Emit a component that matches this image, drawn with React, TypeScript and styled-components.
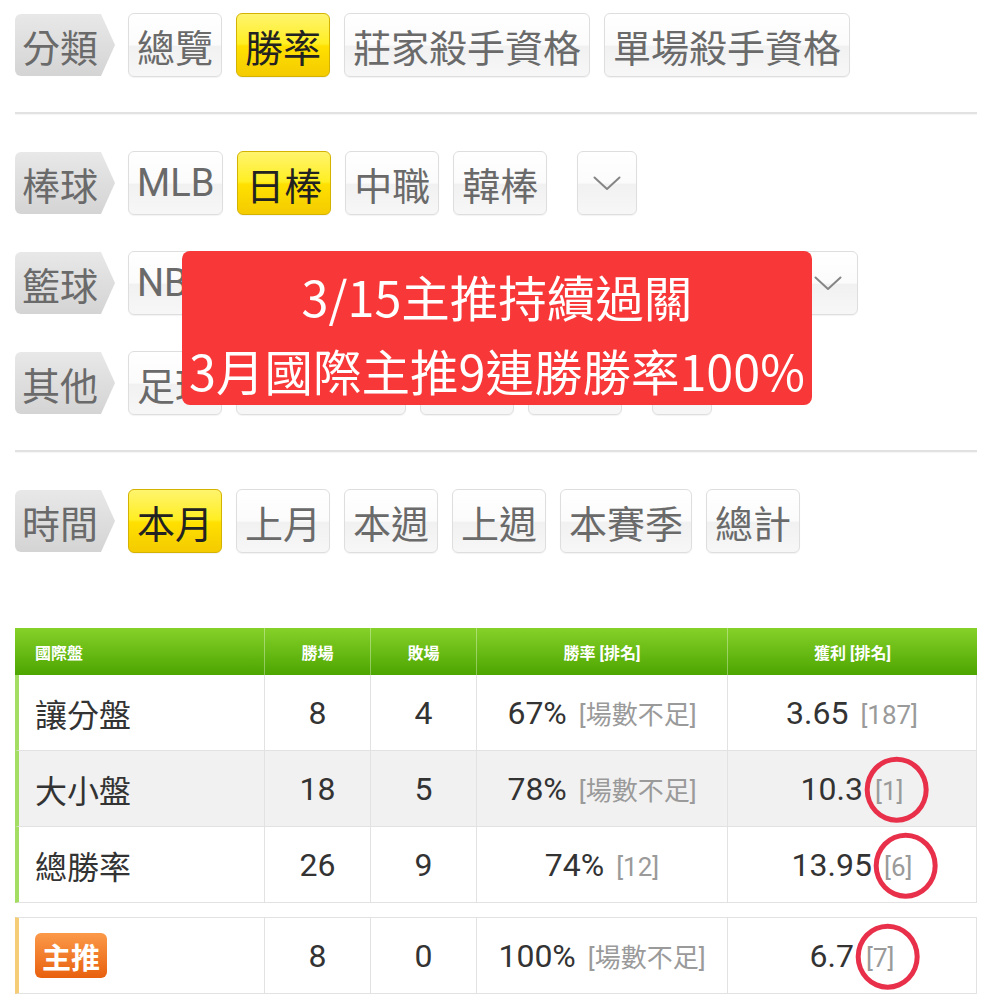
import React from "react";
import styled, { createGlobalStyle, css } from "styled-components";

const GlobalStyle = createGlobalStyle`
  body {
    margin: 0;
    background: #fff;
    font-family: Roboto, "Noto Sans CJK TC", sans-serif;
  }
`;

const Page = styled.div`
  padding: 13px 18px 0 15px;
`;

const FilterGroup = styled.div`
  position: relative;
  display: flex;
  flex-direction: column;
  gap: 36px;
`;

const FilterRow = styled.div`
  display: flex;
  align-items: center;
  gap: 14px;
  height: 64px;
`;

const Tag = styled.div`
  width: 100px;
  height: 62px;
  flex-shrink: 0;
  box-sizing: border-box;
  padding-left: 7px;
  margin-right: -1px;
  display: flex;
  align-items: center;
  font-size: 38px;
  color: #6a6a6a;
  background: linear-gradient(#e8e8e8, #d4d4d4);
  border-radius: 6px 0 0 6px;
  clip-path: polygon(0 0, 86% 0, 100% 50%, 86% 100%, 0 100%);
`;

const Chip = styled.div<{ $active?: boolean }>`
  height: 64px;
  box-sizing: border-box;
  padding: 0 8px;
  display: flex;
  align-items: center;
  justify-content: center;
  flex-shrink: 0;
  font-size: 38px;
  color: #6a6a6a;
  border: 1px solid #dedede;
  border-radius: 6px;
  background: linear-gradient(#ffffff 0%, #fbfbfb 50%, #f1f1f1 52%, #f7f7f7 100%);
  box-shadow: 0 1px 1px rgba(0, 0, 0, 0.05);
  ${(p) =>
    p.$active &&
    css`
      color: #222;
      border-color: #d4b200;
      background: linear-gradient(#fff46e 0%, #ffee22 48%, #ffe000 52%, #f4cb00 100%);
    `}
`;

const DropChip = styled(Chip)`
  width: 60px;
  padding: 0;
  margin-left: 16px;
`;

const Divider = styled.div`
  height: 2px;
  background: #e2e2e2;
  box-shadow: 0 1px 1px rgba(0, 0, 0, 0.04);
  margin: 35px 0 37px;
`;

const Banner = styled.div`
  position: absolute;
  left: 167px;
  top: 100px;
  width: 630px;
  height: 154px;
  box-sizing: border-box;
  padding-top: 8px;
  background: #f83838;
  border-radius: 8px;
  color: #fff;
  font-family: "Noto Sans CJK TC", sans-serif;
  font-size: 48.5px;
  line-height: 74px;
  text-align: center;
  white-space: nowrap;
`;

const StatTable = styled.table<{ $gap?: number }>`
  width: 100%;
  border-collapse: separate;
  border-spacing: 0;
  table-layout: fixed;
  margin-top: ${(p) => p.$gap ?? 0}px;
`;

const HeadCell = styled.th<{ $left?: boolean }>`
  height: 47px;
  padding: 0 0 0 ${(p) => (p.$left ? "20px" : "0")};
  text-align: ${(p) => (p.$left ? "left" : "center")};
  font-size: 16px;
  font-weight: 700;
  color: #fff;
  background: linear-gradient(#86d12a, #4da500);
  border-left: 1px solid rgba(255, 255, 255, 0.35);
  &:first-child {
    border-left: none;
  }
`;

const Row = styled.tr<{ $alt?: boolean }>`
  background: ${(p) => (p.$alt ? "#f1f1f1" : "#fff")};
`;

const Cell = styled.td<{ $top?: boolean }>`
  height: 75px;
  padding: 0;
  text-align: center;
  font-size: 32px;
  color: #333;
  border-bottom: 1px solid #e2e2e2;
  border-left: 1px solid #e2e2e2;
  ${(p) => p.$top && "border-top: 1px solid #e2e2e2;"}
  &:last-child {
    border-right: 1px solid #e2e2e2;
  }
`;

const NameCell = styled(Cell)<{ $accent: string }>`
  text-align: left;
  padding-left: 16px;
  border-left: 4px solid ${(p) => p.$accent};
`;

const Rank = styled.span<{ $circled?: boolean }>`
  position: relative;
  margin-left: 12px;
  font-size: 26px;
  color: #9a9a9a;
  ${(p) =>
    p.$circled &&
    css`
      &::after {
        content: "";
        position: absolute;
        left: 50%;
        top: 50%;
        width: 54px;
        height: 56px;
        border: 5px solid #e8304a;
        border-radius: 50%;
        transform: translate(-38%, -52%);
      }
    `}
`;

const Badge = styled.span`
  display: inline-flex;
  align-items: center;
  justify-content: center;
  width: 72px;
  height: 45px;
  border-radius: 6px;
  background: linear-gradient(#fb9a4a, #e8600e);
  color: #fff;
  font-family: "Noto Sans CJK TC", sans-serif;
  font-size: 29px;
  font-weight: 700;
`;

type Stat = {
  name: string;
  win: number;
  lose: number;
  rate: string;
  rateRank: string;
  profit: string;
  profitRank: string;
  circled?: boolean;
};

const stats: Stat[] = [
  { name: "讓分盤", win: 8, lose: 4, rate: "67%", rateRank: "[場數不足]", profit: "3.65", profitRank: "[187]" },
  { name: "大小盤", win: 18, lose: 5, rate: "78%", rateRank: "[場數不足]", profit: "10.3", profitRank: "[1]", circled: true },
  { name: "總勝率", win: 26, lose: 9, rate: "74%", rateRank: "[12]", profit: "13.95", profitRank: "[6]", circled: true },
];

const Cols = () => (
  <colgroup>
    <col style={{ width: 249 }} />
    <col style={{ width: 106 }} />
    <col style={{ width: 106 }} />
    <col style={{ width: 251 }} />
    <col style={{ width: 250 }} />
  </colgroup>
);

const Options = ({ items, active }: { items: string[]; active?: string }) => (
  <>
    {items.map((t) => (
      <Chip key={t} $active={t === active}>
        {t}
      </Chip>
    ))}
  </>
);

const Dropdown = () => (
  <DropChip>
    <svg width="28" height="15" viewBox="0 0 28 15" fill="none">
      <polyline points="1.5,1.5 14,13 26.5,1.5" stroke="#858585" strokeWidth="2" strokeLinejoin="round" strokeLinecap="round" />
    </svg>
  </DropChip>
);

export default function App() {
  return (
    <Page>
      <GlobalStyle />
      <FilterRow>
        <Tag>分類</Tag>
        <Options items={["總覽", "勝率", "莊家殺手資格", "單場殺手資格"]} active="勝率" />
      </FilterRow>
      <Divider />
      <FilterGroup>
        <FilterRow>
          <Tag>棒球</Tag>
          <Options items={["MLB", "日棒", "中職", "韓棒"]} active="日棒" />
          <Dropdown />
        </FilterRow>
        <FilterRow>
          <Tag>籃球</Tag>
          <Options items={["NBA", "中國職籃", "日職籃", "韓籃", "歐籃"]} />
          <Dropdown />
        </FilterRow>
        <FilterRow>
          <Tag>其他</Tag>
          <Options items={["足球", "美式足球", "冰球", "網球"]} />
          <Dropdown />
        </FilterRow>
        <Banner>
          <div>3/15主推持續過關</div>
          <div>3月國際主推9連勝勝率100%</div>
        </Banner>
      </FilterGroup>
      <Divider />
      <FilterRow>
        <Tag>時間</Tag>
        <Options items={["本月", "上月", "本週", "上週", "本賽季", "總計"]} active="本月" />
      </FilterRow>

      <StatTable $gap={75}>
        <Cols />
        <thead>
          <tr>
            <HeadCell $left>國際盤</HeadCell>
            <HeadCell>勝場</HeadCell>
            <HeadCell>敗場</HeadCell>
            <HeadCell>勝率 [排名]</HeadCell>
            <HeadCell>獲利 [排名]</HeadCell>
          </tr>
        </thead>
        <tbody>
          {stats.map((s, i) => (
            <Row key={s.name} $alt={i === 1}>
              <NameCell $accent="#a3de62">{s.name}</NameCell>
              <Cell>{s.win}</Cell>
              <Cell>{s.lose}</Cell>
              <Cell>
                {s.rate}
                <Rank>{s.rateRank}</Rank>
              </Cell>
              <Cell>
                {s.profit}
                <Rank $circled={s.circled}>{s.profitRank}</Rank>
              </Cell>
            </Row>
          ))}
        </tbody>
      </StatTable>

      <StatTable $gap={14}>
        <Cols />
        <tbody>
          <Row>
            <NameCell $accent="#f5cd78" $top style={{ height: 70 }}>
              <Badge>主推</Badge>
            </NameCell>
            <Cell $top>8</Cell>
            <Cell $top>0</Cell>
            <Cell $top>
              100%
              <Rank>[場數不足]</Rank>
            </Cell>
            <Cell $top>
              6.7
              <Rank $circled>[7]</Rank>
            </Cell>
          </Row>
        </tbody>
      </StatTable>
    </Page>
  );
}
